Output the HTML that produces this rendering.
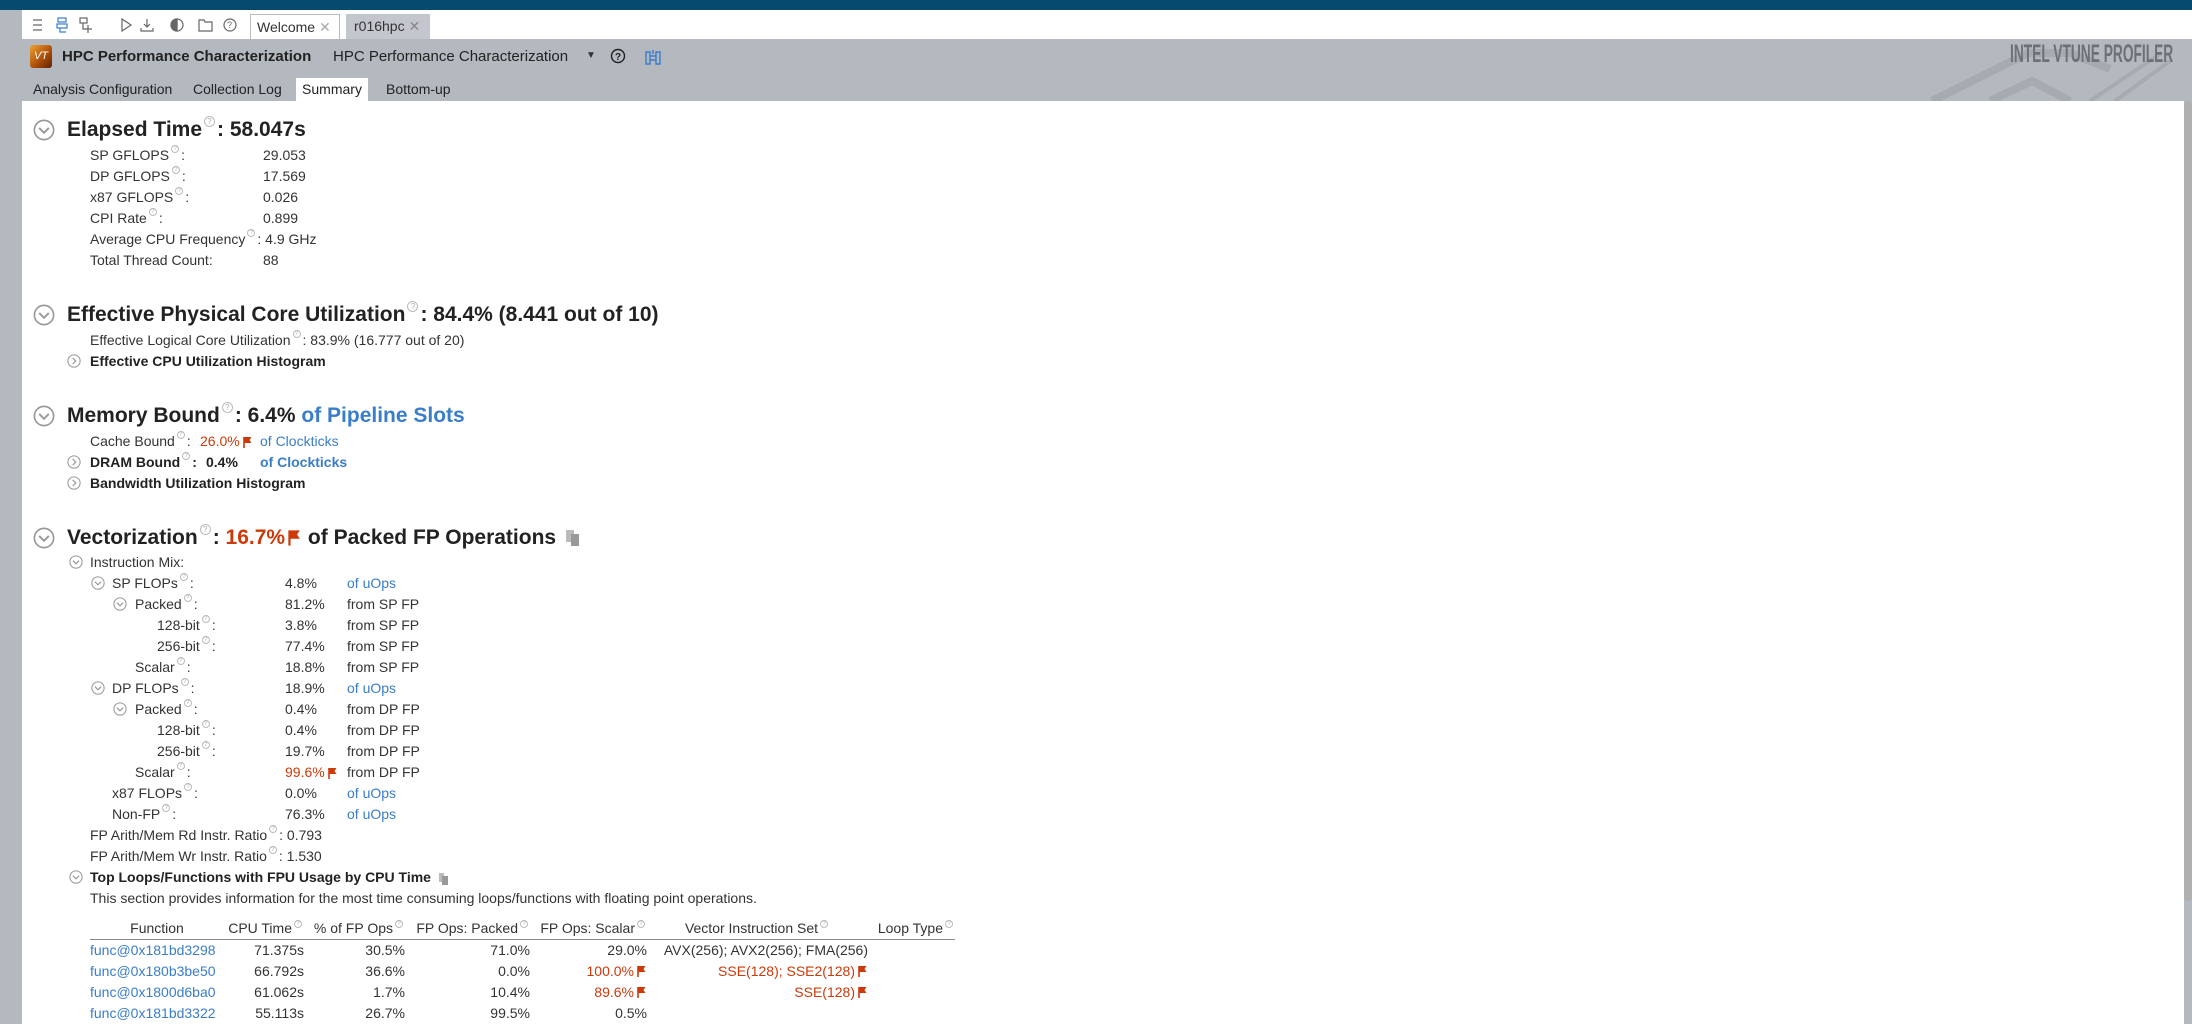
<!DOCTYPE html>
<html><head><meta charset="utf-8"><style>
*{margin:0;padding:0;box-sizing:border-box}
body{width:2192px;height:1024px;overflow:hidden;background:#b4b8bf;font-family:"Liberation Sans",sans-serif;color:#333;position:relative}
.a{position:absolute;white-space:nowrap}
.r{position:absolute;white-space:nowrap;font-size:14px;line-height:20px}
.h{position:absolute;white-space:nowrap;font-size:21px;font-weight:bold;line-height:28px;color:#222}
.b{font-weight:bold;color:#222}
.bl{color:#3a7dc9}
.rd{color:#cc3a0a}
.q{display:inline-block;width:8px;height:8px;border:1px solid #bbb;border-radius:50%;font-size:6px;line-height:6px;text-align:center;color:#aaa;vertical-align:top;margin:0 2px;font-weight:normal}
.h .q{width:11px;height:11px;font-size:8px;line-height:9px}
.fl{display:inline-block;vertical-align:middle;margin-left:3px}
.ic{position:absolute}
th,td{font-size:14px;font-weight:normal;padding:0;white-space:nowrap;height:21px}
</style></head><body>
<div class="a" style="left:0;top:0;width:2192px;height:10px;background:#064a70"></div>
<div class="a" style="left:22px;top:10px;width:2170px;height:29px;background:#fff"></div>
<svg class="ic" style="left:30px;top:16px" width="220" height="18" viewBox="0 0 220 18" fill="none" stroke="#666" stroke-width="1.2">
<path d="M3 4h9M3 9h9M3 14h9"/>
<rect x="28" y="2" width="8" height="4" stroke="#3a7dc9"/><rect x="27" y="8" width="10" height="4" stroke="#3a7dc9"/><path d="M30 12v4h6" stroke="#3a7dc9"/>
<rect x="50" y="2" width="7" height="5"/><path d="M53 7v6h4M58 9v8M54 13h8"/>
<path d="M92 3l9 6-9 6z"/>
<path d="M117 3v8M114 8l3 3 3-3M111 12v3h12v-3"/>
<circle cx="147" cy="9" r="6"/><path d="M147 3v12" /><path d="M147 3a6 6 0 0 0 0 12z" fill="#666"/>
<path d="M169 4h5l1 2h7v9h-13z"/>
<circle cx="200" cy="9" r="6"/><text x="197" y="12" font-size="9" fill="#666" stroke="none">?</text>
</svg>
<div class="a" style="left:250px;top:14px;width:90px;height:25px;background:#fff;border:1px solid #bbb;border-bottom:none;font-size:14px;line-height:24px;padding-left:6px">Welcome <span style="color:#aaa">✕</span></div>
<div class="a" style="left:346px;top:14px;width:84px;height:25px;background:#c3c7cd;font-size:14px;line-height:24px;padding-left:8px">r016hpc <span style="color:#888">✕</span></div>
<div class="a" style="left:30px;top:45px;width:22px;height:23px;border-radius:3px;background:linear-gradient(135deg,#f3a133,#a84a08 60%,#5a2404);color:#fff;font-size:11px;line-height:22px;text-align:center;font-style:italic">VT</div>
<div class="a b" style="left:62px;top:47px;font-size:15px;line-height:20px">HPC Performance Characterization</div>
<div class="a" style="left:333px;top:47px;font-size:15px;line-height:20px;color:#222">HPC Performance Characterization</div>
<div class="a" style="left:586px;top:46px;font-size:10px;line-height:20px">▼</div>
<svg class="ic" style="left:610px;top:48px" width="16" height="16"><circle cx="8" cy="8" r="6.5" fill="none" stroke="#222" stroke-width="1.4"/><text x="5" y="12" font-size="10" font-weight="bold" fill="#222">?</text></svg>
<svg class="ic" style="left:644px;top:48px" width="18" height="18" fill="none" stroke="#3a7dc9" stroke-width="1.4"><path d="M2 4h4v12H2zM12 4h4v12h-4zM6 8h6M6 12h6M9 2v4"/></svg>
<svg class="ic" style="left:1920px;top:39px" width="272" height="62"><path d="M12 62L108 14 L150 14 L190 30" fill="none" stroke="#a6aab1" stroke-width="8"/><path d="M70 62L112 42 L150 62" fill="none" stroke="#a6aab1" stroke-width="8"/><path d="M170 62L240 15M195 62L250 22" stroke="#a6aab1" stroke-width="4"/></svg>
<div class="a" style="left:2010px;top:40px;font-size:25px;line-height:28px;font-weight:bold;color:#6d7076;transform:scaleX(0.55);transform-origin:left">INTEL VTUNE PROFILER</div>
<div class="a" style="left:33px;top:79px;font-size:14px;line-height:20px;color:#222">Analysis Configuration</div>
<div class="a" style="left:193px;top:79px;font-size:14px;line-height:20px;color:#222">Collection Log</div>
<div class="a" style="left:296px;top:78px;width:72px;height:23px;background:#fff;font-size:14px;line-height:22px;text-align:center;color:#222">Summary</div>
<div class="a" style="left:386px;top:79px;font-size:14px;line-height:20px;color:#222">Bottom-up</div>
<div class="a" style="left:22px;top:101px;width:2162px;height:923px;background:#fff"></div>
<div class="a" style="left:2184px;top:101px;width:8px;height:800px;background:#b0b0b0;border-radius:3px"></div>

<svg width="0" height="0" style="position:absolute"><defs>
<g id="cd"><circle cx="8" cy="8" r="7" fill="none" stroke="#999" stroke-width="1.2"/><path d="M4.5 6.5l3.5 3.5 3.5-3.5" fill="none" stroke="#999" stroke-width="1.4"/></g>
<g id="cr"><circle cx="8" cy="8" r="7" fill="none" stroke="#999" stroke-width="1.2"/><path d="M6.5 4.5l3.5 3.5-3.5 3.5" fill="none" stroke="#999" stroke-width="1.4"/></g>
<g id="f"><path d="M1 1v11" stroke="#cc3a0a" stroke-width="1.6"/><path d="M1.5 1h7l-2 3 2 3h-7z" fill="#cc3a0a"/></g>
</defs></svg>

<svg class="ic" style="left:33px;top:119px" width="22" height="22" viewBox="0 0 16 16"><use href="#cd"/></svg>
<div class="h" style="left:67px;top:116px">Elapsed Time<span class="q">?</span>: 58.047s</div>
<div class="r" style="left:90px;top:145px">SP GFLOPS<span class="q">?</span>:</div><div class="r" style="left:263px;top:145px">29.053</div>
<div class="r" style="left:90px;top:166px">DP GFLOPS<span class="q">?</span>:</div><div class="r" style="left:263px;top:166px">17.569</div>
<div class="r" style="left:90px;top:187px">x87 GFLOPS<span class="q">?</span>:</div><div class="r" style="left:263px;top:187px">0.026</div>
<div class="r" style="left:90px;top:208px">CPI Rate<span class="q">?</span>:</div><div class="r" style="left:263px;top:208px">0.899</div>
<div class="r" style="left:90px;top:229px">Average CPU Frequency<span class="q">?</span>: 4.9 GHz</div>
<div class="r" style="left:90px;top:250px">Total Thread Count:</div><div class="r" style="left:263px;top:250px">88</div>

<svg class="ic" style="left:33px;top:304px" width="22" height="22" viewBox="0 0 16 16"><use href="#cd"/></svg>
<div class="h" style="left:67px;top:301px">Effective Physical Core Utilization<span class="q">?</span>: 84.4% (8.441 out of 10)</div>
<div class="r" style="left:90px;top:330px">Effective Logical Core Utilization<span class="q">?</span>: 83.9% (16.777 out of 20)</div>
<svg class="ic" style="left:67px;top:354px" width="14" height="14" viewBox="0 0 16 16"><use href="#cr"/></svg>
<div class="r b" style="left:90px;top:351px">Effective CPU Utilization Histogram</div>

<svg class="ic" style="left:33px;top:405px" width="22" height="22" viewBox="0 0 16 16"><use href="#cd"/></svg>
<div class="h" style="left:67px;top:402px">Memory Bound<span class="q">?</span>: 6.4% <span class="bl">of Pipeline Slots</span></div>
<div class="r" style="left:90px;top:431px">Cache Bound<span class="q">?</span>:</div><div class="r rd" style="left:200px;top:431px">26.0%<svg class="fl" width="10" height="13"><use href="#f"/></svg></div><div class="r bl" style="left:260px;top:431px">of Clockticks</div>
<svg class="ic" style="left:67px;top:455px" width="14" height="14" viewBox="0 0 16 16"><use href="#cr"/></svg>
<div class="r b" style="left:90px;top:452px">DRAM Bound<span class="q">?</span>:</div><div class="r b" style="left:206px;top:452px">0.4%</div><div class="r b bl" style="left:260px;top:452px;color:#3a7dc9">of Clockticks</div>
<svg class="ic" style="left:67px;top:476px" width="14" height="14" viewBox="0 0 16 16"><use href="#cr"/></svg>
<div class="r b" style="left:90px;top:473px">Bandwidth Utilization Histogram</div>

<svg class="ic" style="left:33px;top:527px" width="22" height="22" viewBox="0 0 16 16"><use href="#cd"/></svg>
<div class="h" style="left:67px;top:524px">Vectorization<span class="q">?</span>: <span class="rd">16.7%</span><svg class="fl" width="14" height="18" viewBox="0 0 10 13"><use href="#f"/></svg> of Packed FP Operations <svg class="fl" width="16" height="18"><rect x="1" y="1" width="8" height="12" fill="#bbb"/><rect x="6" y="5" width="8" height="12" fill="#999"/></svg></div>
<svg class="ic" style="left:69px;top:555px" width="14" height="14" viewBox="0 0 16 16"><use href="#cd"/></svg>
<div class="r" style="left:90px;top:552px">Instruction Mix:</div>

<svg class="ic" style="left:91px;top:576px" width="14" height="14" viewBox="0 0 16 16"><use href="#cd"/></svg>
<div class="r" style="left:112px;top:573px">SP FLOPs<span class="q">?</span>:</div><div class="r" style="left:285px;top:573px">4.8%</div><div class="r bl" style="left:347px;top:573px">of uOps</div>
<svg class="ic" style="left:113px;top:597px" width="14" height="14" viewBox="0 0 16 16"><use href="#cd"/></svg>
<div class="r" style="left:135px;top:594px">Packed<span class="q">?</span>:</div><div class="r" style="left:285px;top:594px">81.2%</div><div class="r" style="left:347px;top:594px">from SP FP</div>
<div class="r" style="left:157px;top:615px">128-bit<span class="q">?</span>:</div><div class="r" style="left:285px;top:615px">3.8%</div><div class="r" style="left:347px;top:615px">from SP FP</div>
<div class="r" style="left:157px;top:636px">256-bit<span class="q">?</span>:</div><div class="r" style="left:285px;top:636px">77.4%</div><div class="r" style="left:347px;top:636px">from SP FP</div>
<div class="r" style="left:135px;top:657px">Scalar<span class="q">?</span>:</div><div class="r" style="left:285px;top:657px">18.8%</div><div class="r" style="left:347px;top:657px">from SP FP</div>
<svg class="ic" style="left:91px;top:681px" width="14" height="14" viewBox="0 0 16 16"><use href="#cd"/></svg>
<div class="r" style="left:112px;top:678px">DP FLOPs<span class="q">?</span>:</div><div class="r" style="left:285px;top:678px">18.9%</div><div class="r bl" style="left:347px;top:678px">of uOps</div>
<svg class="ic" style="left:113px;top:702px" width="14" height="14" viewBox="0 0 16 16"><use href="#cd"/></svg>
<div class="r" style="left:135px;top:699px">Packed<span class="q">?</span>:</div><div class="r" style="left:285px;top:699px">0.4%</div><div class="r" style="left:347px;top:699px">from DP FP</div>
<div class="r" style="left:157px;top:720px">128-bit<span class="q">?</span>:</div><div class="r" style="left:285px;top:720px">0.4%</div><div class="r" style="left:347px;top:720px">from DP FP</div>
<div class="r" style="left:157px;top:741px">256-bit<span class="q">?</span>:</div><div class="r" style="left:285px;top:741px">19.7%</div><div class="r" style="left:347px;top:741px">from DP FP</div>
<div class="r" style="left:135px;top:762px">Scalar<span class="q">?</span>:</div><div class="r rd" style="left:285px;top:762px">99.6%<svg class="fl" width="10" height="13"><use href="#f"/></svg></div><div class="r" style="left:347px;top:762px">from DP FP</div>
<div class="r" style="left:112px;top:783px">x87 FLOPs<span class="q">?</span>:</div><div class="r" style="left:285px;top:783px">0.0%</div><div class="r bl" style="left:347px;top:783px">of uOps</div>
<div class="r" style="left:112px;top:804px">Non-FP<span class="q">?</span>:</div><div class="r" style="left:285px;top:804px">76.3%</div><div class="r bl" style="left:347px;top:804px">of uOps</div>
<div class="r" style="left:90px;top:825px">FP Arith/Mem Rd Instr. Ratio<span class="q">?</span>: 0.793</div>
<div class="r" style="left:90px;top:846px">FP Arith/Mem Wr Instr. Ratio<span class="q">?</span>: 1.530</div>

<svg class="ic" style="left:69px;top:870px" width="14" height="14" viewBox="0 0 16 16"><use href="#cd"/></svg>
<div class="r b" style="left:90px;top:867px">Top Loops/Functions with FPU Usage by CPU Time <svg class="fl" width="11" height="13"><rect x="1" y="1" width="5" height="9" fill="#bbb"/><rect x="4" y="4" width="6" height="9" fill="#999"/></svg></div>
<div class="r" style="left:90px;top:888px">This section provides information for the most time consuming loops/functions with floating point operations.</div>

<table class="a" style="left:90px;top:918px;border-collapse:collapse;color:#333">
<tr style="border-bottom:1.5px solid #888"><th style="width:134px;text-align:center">Function</th><th style="width:80px;text-align:right">CPU Time<span class="q">?</span></th><th style="width:101px;text-align:right">% of FP Ops<span class="q">?</span></th><th style="width:125px;text-align:right">FP Ops: Packed<span class="q">?</span></th><th style="width:117px;text-align:right">FP Ops: Scalar<span class="q">?</span></th><th style="width:221px;text-align:center">Vector Instruction Set<span class="q">?</span></th><th style="width:87px;text-align:right">Loop Type<span class="q">?</span></th></tr>
<tr><td class="bl">func@0x181bd3298</td><td style="text-align:right">71.375s</td><td style="text-align:right">30.5%</td><td style="text-align:right">71.0%</td><td style="text-align:right">29.0%</td><td style="text-align:right">AVX(256); AVX2(256); FMA(256)</td><td></td></tr>
<tr><td class="bl">func@0x180b3be50</td><td style="text-align:right">66.792s</td><td style="text-align:right">36.6%</td><td style="text-align:right">0.0%</td><td class="rd" style="text-align:right">100.0%<svg class="fl" width="10" height="13"><use href="#f"/></svg></td><td class="rd" style="text-align:right">SSE(128); SSE2(128)<svg class="fl" width="10" height="13"><use href="#f"/></svg></td><td></td></tr>
<tr><td class="bl">func@0x1800d6ba0</td><td style="text-align:right">61.062s</td><td style="text-align:right">1.7%</td><td style="text-align:right">10.4%</td><td class="rd" style="text-align:right">89.6%<svg class="fl" width="10" height="13"><use href="#f"/></svg></td><td class="rd" style="text-align:right">SSE(128)<svg class="fl" width="10" height="13"><use href="#f"/></svg></td><td></td></tr>
<tr><td class="bl">func@0x181bd3322</td><td style="text-align:right">55.113s</td><td style="text-align:right">26.7%</td><td style="text-align:right">99.5%</td><td style="text-align:right">0.5%</td><td></td><td></td></tr>
</table>
</body></html>
